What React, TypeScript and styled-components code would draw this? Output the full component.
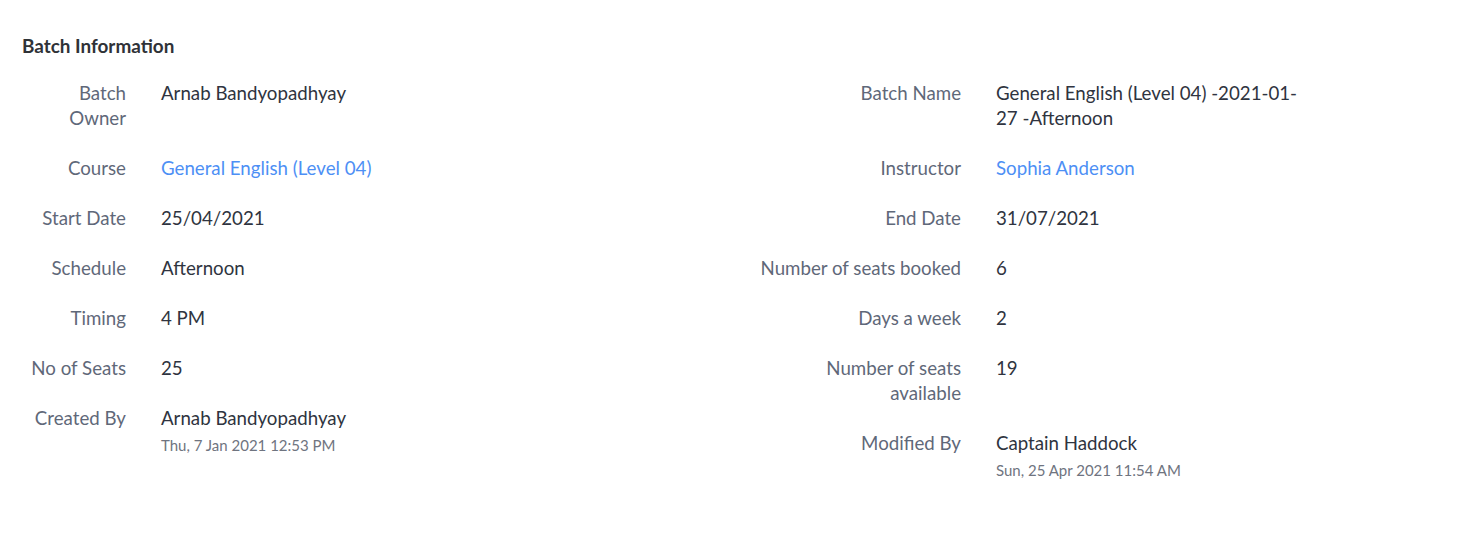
import React from 'react'
import { createGlobalStyle, styled } from 'styled-components'

type Field = {
  label: string
  value: string
  link?: boolean
  sub?: string
}

const leftFields: Field[] = [
  { label: 'Batch Owner', value: 'Arnab Bandyopadhyay' },
  { label: 'Course', value: 'General English (Level 04)', link: true },
  { label: 'Start Date', value: '25/04/2021' },
  { label: 'Schedule', value: 'Afternoon' },
  { label: 'Timing', value: '4 PM' },
  { label: 'No of Seats', value: '25' },
  { label: 'Created By', value: 'Arnab Bandyopadhyay', sub: 'Thu, 7 Jan 2021 12:53 PM' },
]

const rightFields: Field[] = [
  { label: 'Batch Name', value: 'General English (Level 04) -2021-01-27 -Afternoon' },
  { label: 'Instructor', value: 'Sophia Anderson', link: true },
  { label: 'End Date', value: '31/07/2021' },
  { label: 'Number of seats booked', value: '6' },
  { label: 'Days a week', value: '2' },
  { label: 'Number of seats available', value: '19' },
  { label: 'Modified By', value: 'Captain Haddock', sub: 'Sun, 25 Apr 2021 11:54 AM' },
]

const GlobalStyle = createGlobalStyle`
  * { box-sizing: border-box; }
  body {
    margin: 0;
    background: #ffffff;
    font-family: Lato, 'Open Sans', sans-serif;
  }
`

const FieldList = ({ fields, labelWidth, valueWidth }: { fields: Field[]; labelWidth: number; valueWidth?: number }) => (
  <Column>
    {fields.map((f) => (
      <Row key={f.label} $labelWidth={labelWidth} $valueWidth={valueWidth}>
        <Label>{f.label}</Label>
        <ValueWrap>
          <Value $link={f.link}>{f.value}</Value>
          {f.sub && <SubValue>{f.sub}</SubValue>}
        </ValueWrap>
      </Row>
    ))}
  </Column>
)

const App = () => {
  return (
    <>
      <GlobalStyle />
      <Section>
        <Title>{'Batch Information'}</Title>
        <Columns>
          <FieldList fields={leftFields} labelWidth={100} />
          <FieldList fields={rightFields} labelWidth={204} valueWidth={305} />
        </Columns>
      </Section>
    </>
  )
}

const Section = styled.div`
  padding: 35px 16px 0 16px;
`

const Title = styled.h3`
  margin: 0 0 0 6px;
  font-size: 18.9px;
  line-height: 22px;
  font-weight: 700;
  color: #2f3237;
`

const Columns = styled.div`
  display: flex;
  margin-top: 24px;
  padding-left: 10px;
  padding-right: 147px;
`

const Column = styled.div`
  flex: 1;
  display: flex;
  flex-direction: column;
  gap: 25px;

  &:last-child {
    flex: 0 0 auto;
  }
`

const Row = styled.div<{ $labelWidth: number; $valueWidth?: number }>`
  display: grid;
  grid-template-columns: ${({ $labelWidth }) => $labelWidth}px ${({ $valueWidth }) => ($valueWidth ? `${$valueWidth}px` : '1fr')};
  column-gap: 35px;
  font-size: 18.7px;
  line-height: 25px;
`

const Label = styled.div`
  text-align: right;
  color: #5f6879;
`

const ValueWrap = styled.div`
  display: flex;
  flex-direction: column;
`

const Value = styled.div<{ $link?: boolean }>`
  color: ${({ $link }) => ($link ? '#4d8ff5' : '#2f3440')};
`

const SubValue = styled.div`
  margin-top: 4px;
  font-size: 15px;
  line-height: 20px;
  color: #6f7480;
`

export default App
